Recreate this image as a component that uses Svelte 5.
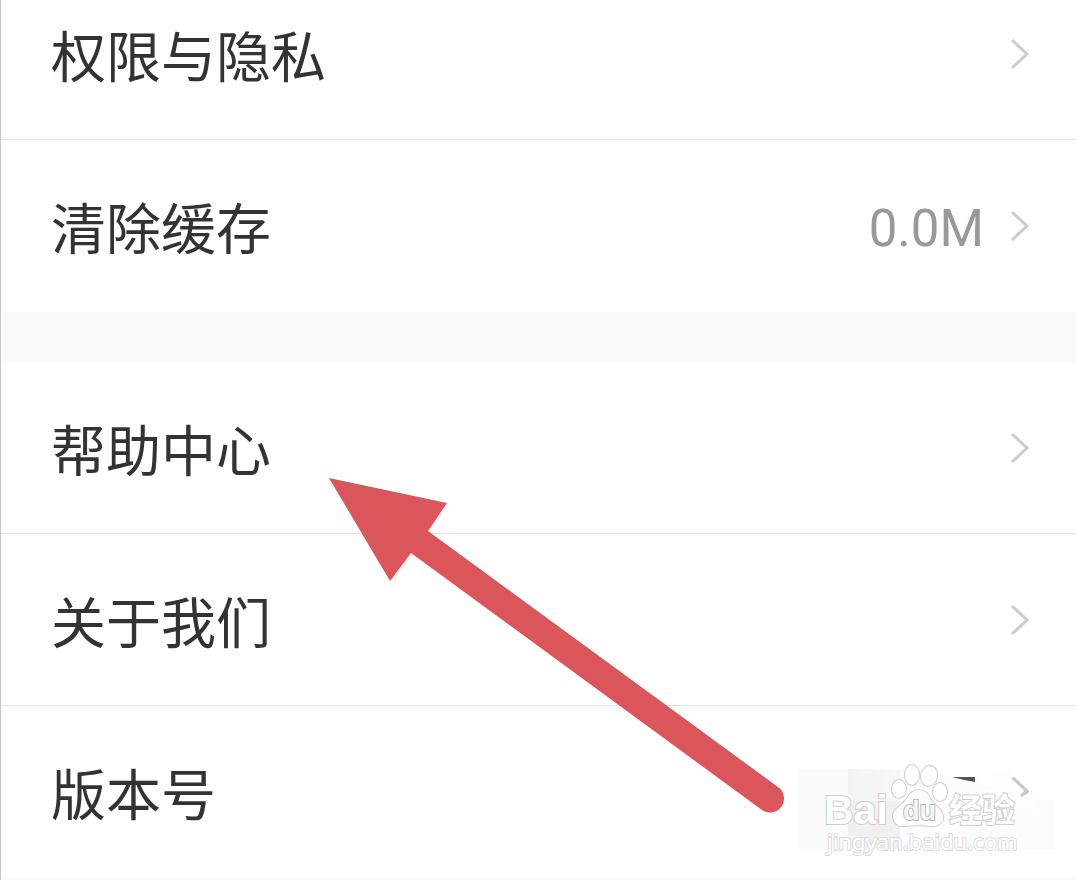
<script lang="ts">
	const groups = [
		[
			{ id: 'privacy', label: '权限与隐私', value: '' },
			{ id: 'cache', label: '清除缓存', value: '0.0M' }
		],
		[
			{ id: 'help', label: '帮助中心', value: '' },
			{ id: 'about', label: '关于我们', value: '' },
			{ id: 'version', label: '版本号', value: '' }
		]
	];
</script>

<main class="settings">
	{#each groups as rows}
		<section class="group">
			{#each rows as row (row.id)}
				<button type="button" class="row">
					<span class="label">{row.label}</span>
					{#if row.value}
						<span class="value">{row.value}</span>
					{/if}
					<svg class="chevron" viewBox="0 0 20 34" aria-hidden="true">
						<path d="M2 3 L17 17 L2 31" />
					</svg>
				</button>
			{/each}
		</section>
	{/each}

	<!-- Pointer to the help row -->
	<svg class="pointer" viewBox="0 0 456 336" aria-hidden="true">
		<path d="M0 1 L118 26 L99 54 L449 310 A14 14 0 0 1 433 333 L82 76 L61 104 Z" />
	</svg>

	<!-- Masked version number and site mark -->
	<svg class="watermark" viewBox="0 0 280 120" aria-label="Baidu 经验">
		<defs>
			<linearGradient id="mask-fade" x1="0" x2="1" y1="0" y2="0">
				<stop offset="0" stop-color="#f3f3f3" />
				<stop offset="1" stop-color="#fdfdfd" />
			</linearGradient>
		</defs>
		<path class="patch" d="M2 9 H52 V89 H2 Z" />
		<path fill="url(#mask-fade)" d="M52 9 L105 10 L160 17 V89 H52 Z" />
		<path fill="#f0f0f0" d="M52 41 H104 V89 H52 Z" />
		<path fill="#fcfcfc" d="M104 10 L160 17 L218 33 L258 41 V89 H104 Z" />
		<path class="digit" d="M156 17 H179 V22 L168 20 Z" />
		<path class="cover" d="M196 10 H215 L215 18 L228 29 L224 34 L240 36 L240 52 H212 L196 28 Z" />
		<path class="bit" d="M217 18 L231 31 L225 36" />

		<text class="mark bai" x="28" y="64">Bai</text>
		<g class="mark">
			<ellipse cx="103" cy="29" rx="7" ry="9" />
			<ellipse cx="116" cy="15" rx="7" ry="10" />
			<ellipse cx="133" cy="16" rx="8" ry="10" transform="rotate(12 133 16)" />
			<ellipse cx="144" cy="32" rx="7" ry="9" />
			<path d="M123 30 C115 30 113 36 109 41 C104 46 97 50 97 56 C97 63 102 67 109 66 C116 65 130 65 135 66 C143 67 148 62 147 56 C146 49 139 46 136 41 C132 35 130 30 123 30 Z" />
		</g>
		<text class="mark du" x="107" y="60">du</text>
		<text class="mark cjk" x="153" y="62">经验</text>
		<text class="mark site" x="31" y="90">jingyan.baidu.com</text>
	</svg>
</main>

<style>
	:global(body) {
		background: #f9f9f9;
	}

	.settings {
		position: relative;
		box-sizing: border-box;
		min-height: 100vh;
		overflow: hidden;
		border-left: 1px solid #c8c8c8;
		background: #f9f9f9;
		font-family: Roboto, 'Noto Sans CJK SC', sans-serif;
	}

	.group {
		background: #fefefe;
		margin-bottom: 50px;
	}

	/* the list is scrolled a little past its first row */
	.group:first-child {
		margin-top: -32px;
	}

	.group:last-of-type {
		margin-bottom: 0;
	}

	.row {
		display: flex;
		align-items: center;
		box-sizing: border-box;
		width: 100%;
		height: 172px;
		padding: 0 46px 0 50px;
		border: none;
		border-bottom: 1px solid #e4e4e4;
		background: none;
		font: inherit;
		text-align: left;
		cursor: pointer;
	}

	.row:last-child {
		border-bottom-color: transparent;
	}

	.label {
		flex: 1;
		padding-top: 8px;
		color: #333;
		font-size: 55px;
		line-height: 80px;
	}

	.value {
		margin-right: 26px;
		padding-top: 6px;
		color: #999;
		font-size: 51px;
		line-height: 60px;
	}

	.chevron {
		width: 20px;
		height: 34px;
		fill: none;
		stroke: #ccc;
		stroke-width: 3;
	}

	.pointer {
		position: absolute;
		top: 477px;
		left: 328px;
		width: 456px;
		height: 336px;
		fill: #db565b;
		pointer-events: none;
	}

	.watermark {
		position: absolute;
		top: 760px;
		right: 0;
		width: 280px;
		height: 120px;
		pointer-events: none;
	}

	.patch {
		fill: #fbfbfb;
	}

	.digit {
		fill: #555;
	}

	.cover {
		fill: #fdfdfd;
	}

	.bit {
		fill: none;
		stroke: #c8c8c8;
		stroke-width: 3;
	}

	/* outline sits behind the fill, so letters keep their weight */
	.mark {
		fill: #fefefe;
		stroke: #cfcfcf;
		stroke-width: 2;
		paint-order: stroke;
	}

	.bai {
		font: bold 41px 'Liberation Sans', sans-serif;
	}

	.du {
		fill: #f6f6f6;
		stroke: #bbb;
		font: bold 27px 'Liberation Sans', sans-serif;
	}

	.cjk {
		font: bold 33px 'Noto Sans CJK SC', sans-serif;
	}

	.site {
		stroke: #dcdcdc;
		font: 22px 'Noto Sans', sans-serif;
	}
</style>
